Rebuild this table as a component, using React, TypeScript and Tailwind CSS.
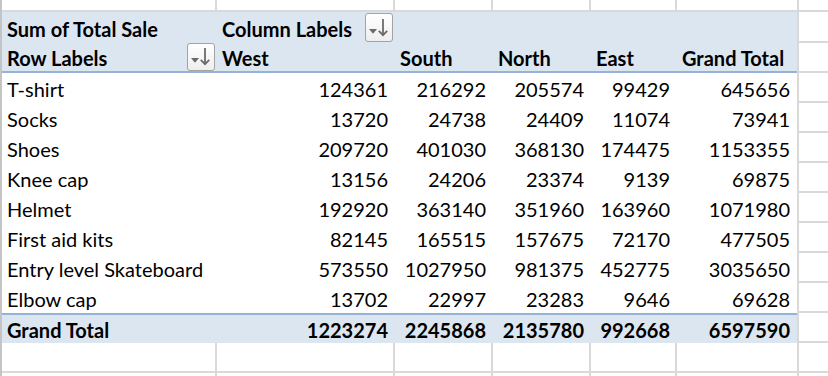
const ROWS: [string, number[]][] = [
  ["T-shirt", [124361, 216292, 205574, 99429, 645656]],
  ["Socks", [13720, 24738, 24409, 11074, 73941]],
  ["Shoes", [209720, 401030, 368130, 174475, 1153355]],
  ["Knee cap", [13156, 24206, 23374, 9139, 69875]],
  ["Helmet", [192920, 363140, 351960, 163960, 1071980]],
  ["First aid kits", [82145, 165515, 157675, 72170, 477505]],
  ["Entry level Skateboard", [573550, 1027950, 981375, 452775, 3035650]],
  ["Elbow cap", [13702, 22997, 23283, 9646, 69628]],
];

const TOTALS = [1223274, 2245868, 2135780, 992668, 6597590];

// widths of columns B..F (A is 215)
const VALUE_COLS = ["w-[178px]", "w-[98px]", "w-[98px]", "w-[86px]", "w-[120px]"];

function FilterButton({ className = "" }: { className?: string }) {
  return (
    <div
      className={`ml-auto mr-[2px] grid w-[28px] shrink-0 place-items-center rounded-[3px] border border-[#a3a3a3] bg-gradient-to-b from-white to-[#eeeeee] ${className}`}
    >
      <svg width="26" height="26" viewBox="0 0 26 26" fill="none">
        <path d="M3 14h8l-4 4.8z" fill="#6a6a6a" />
        <path d="M17 4v16" stroke="#6a6a6a" strokeWidth="1.8" />
        <path d="M12.8 15.8l4.2 4.4 4.2-4.4" stroke="#6a6a6a" strokeWidth="1.8" />
      </svg>
    </div>
  );
}

function Spare({ h }: { h: string }) {
  return <div className={`${h} flex-1 border-b-2 border-l-2 border-[#d9d9d9]`} />;
}

function GridRow({ h }: { h: string }) {
  return (
    <div className={`flex ${h}`}>
      <div className="w-[215px] border-r-2 border-b-2 border-[#d9d9d9]" />
      {VALUE_COLS.map((w, i) => (
        <div
          key={i}
          className={`${w} border-b-2 border-[#d9d9d9] ${i < 4 ? "border-r-2" : ""}`}
        />
      ))}
      <Spare h={h} />
    </div>
  );
}

function ValueRow({
  label,
  values,
  bold,
  band,
}: {
  label: string;
  values: number[];
  bold?: boolean;
  band?: boolean;
}) {
  return (
    <div className="flex h-[30px]">
      <div
        className={`flex w-[215px] items-center pl-[5px] pt-[2px] ${
          band ? "border-t-2 border-[#95b3d7] bg-[#dce6f1]" : ""
        } ${bold ? "font-bold" : ""}`}
      >
        {label}
      </div>
      {values.map((v, i) => (
        <div
          key={i}
          className={`${VALUE_COLS[i]} flex items-center justify-end pr-[7px] pt-[2px] ${
            band ? "border-t-2 border-[#95b3d7] bg-[#dce6f1]" : ""
          } ${bold ? "font-bold" : ""}`}
        >
          {v}
        </div>
      ))}
      <Spare h="h-[30px]" />
    </div>
  );
}

export default function App() {
  return (
    <div
      className="h-[376px] w-[828px] overflow-hidden border-l-2 border-[#c4c4c4] bg-white text-[20px] leading-none text-black"
      style={{ fontFamily: "Lato, 'Open Sans', sans-serif" }}
    >
      <GridRow h="h-[12px]" />

      <div className="flex h-[31px]">
        <div className="flex w-[215px] items-center bg-[#dce6f1] pl-[5px] pt-[3px] font-bold">
          Sum of Total Sale
        </div>
        <div className="flex w-[178px] items-start bg-[#dce6f1] pl-[5px] font-bold">
          <span className="self-center pt-[3px]">Column Labels</span>
          <FilterButton className="mt-[1px] h-[29px]" />
        </div>
        <div className="w-[402px] bg-[#dce6f1]" />
        <Spare h="h-[31px]" />
      </div>

      <div className="flex h-[30px]">
        <div className="flex w-[215px] items-start border-b-2 border-[#95b3d7] bg-[#dce6f1] pl-[5px] font-bold">
          <span className="self-center pt-[2px]">Row Labels</span>
          <FilterButton className="h-[28px]" />
        </div>
        {["West", "South", "North", "East", "Grand Total"].map((t, i) => (
          <div
            key={t}
            className={`${VALUE_COLS[i]} flex items-center border-b-2 border-[#95b3d7] bg-[#dce6f1] pl-[5px] pt-[2px] font-bold`}
          >
            {t}
          </div>
        ))}
        <Spare h="h-[30px]" />
      </div>

      {ROWS.map(([label, values]) => (
        <ValueRow key={label} label={label} values={values} />
      ))}
      <ValueRow label="Grand Total" values={TOTALS} bold band />

      <GridRow h="h-[30px]" />
      <GridRow h="h-[30px]" />
    </div>
  );
}
